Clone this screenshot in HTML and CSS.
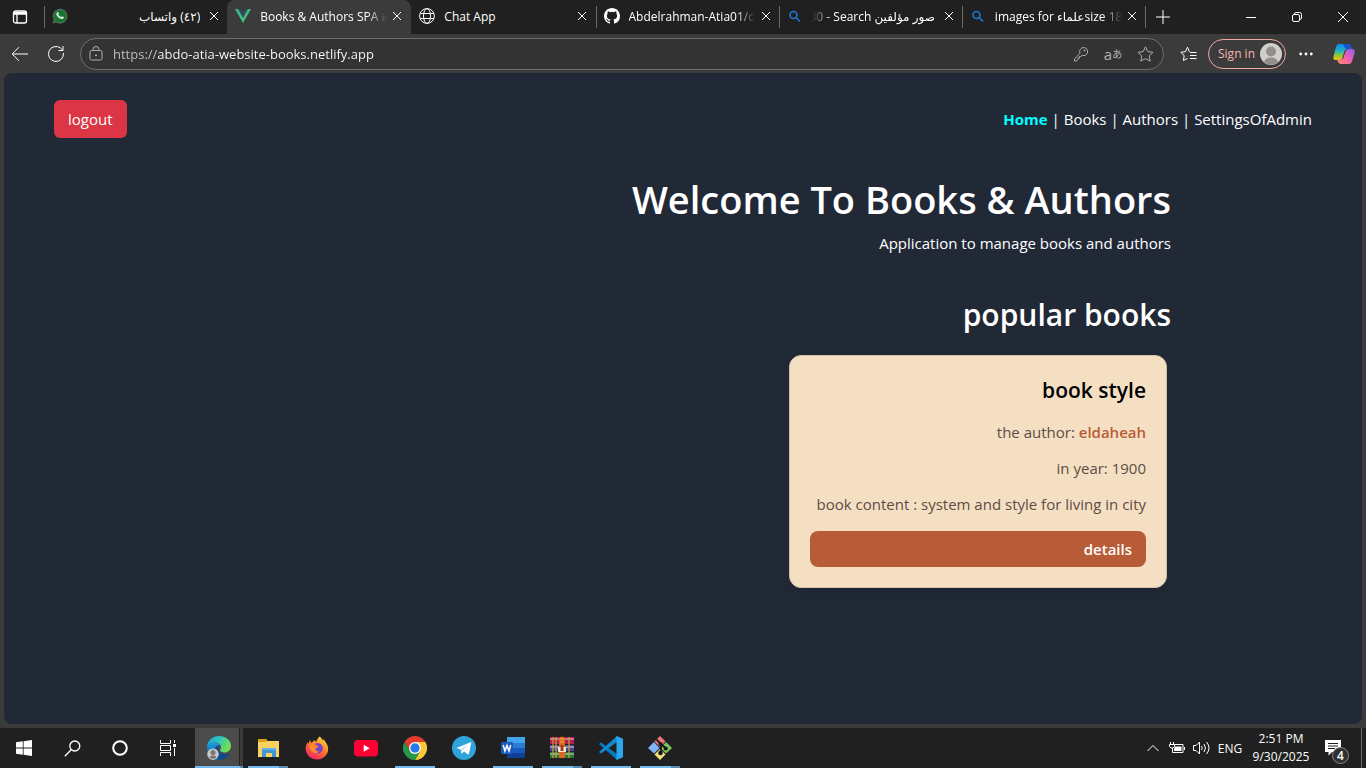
FILE: index.html
```
<!DOCTYPE html>
<html lang="en">
<head>
  <meta charset="UTF-8">
  <meta name="viewport" content="width=device-width, initial-scale=1.0">
  <title>Books &amp; Authors SPA</title>
  <link rel="stylesheet" href="styles.css">
</head>
<body>
  <!-- Browser tabs -->
  <div class="tab-bar">
    <button class="tab-menu" aria-label="Tab actions">
      <svg width="16" height="16" viewBox="0 0 16 16" fill="none" stroke="#fff" stroke-width="1.3"><rect x="1.5" y="2" width="13" height="12" rx="2"/><path d="M2 3.5h12M2 5h12M5 5v9" /></svg>
    </button>
    <div class="tabs">
      <div class="tab first">
        <svg class="favicon" viewBox="0 0 16 16"><path d="M0.6 15.5 1.7 11.6A7.3 7.3 0 1 1 4.4 14.4Z" fill="#606b65"/><path d="M1.9 14.2 2.8 11.3A6.2 6.2 0 1 1 4.8 13.4Z" fill="#14752f"/><path d="M5.4 4.2c.5-.4.9-.2 1.1.2l.5 1.2c.1.4-.4.8-.6 1 .6 1.2 1.6 2 2.8 2.6.3-.2.7-1 1.1-.8l1.5.7c.3.3 0 1.2-.5 1.6-2.8 1.7-7.7-2.900-6.900-5.200.2-.6.6-1 1-1.300z" fill="#d4e1d8"/></svg>
        <span class="tab-title rtl">(٤٢) واتساب</span>
        <button class="tab-close" aria-label="Close tab"><svg width="10" height="10" viewBox="0 0 10 10"><path d="M1 1l8 8M9 1l-8 8"/></svg></button>
      </div>
      <div class="tab active">
        <svg class="favicon" viewBox="0 0 16 16"><path d="M0 1h3.200L8 9.400 12.800 1H16L8 15z" fill="#42b883"/><path d="M3.200 1h3L8 4.100 9.800 1h3L8 9.400z" fill="#35495e"/></svg>
        <span class="tab-title fade">Books &amp; Authors SPA ة</span>
        <button class="tab-close" aria-label="Close tab"><svg width="10" height="10" viewBox="0 0 10 10"><path d="M1 1l8 8M9 1l-8 8"/></svg></button>
      </div>
      <div class="tab">
        <svg class="favicon" viewBox="0 0 16 16" fill="none" stroke="#fff"><circle cx="8" cy="8" r="7.400"/><ellipse cx="8" cy="8" rx="3.500" ry="7.400"/><path d="M1.400 5.500h13.200M1.400 10.500h13.200"/></svg>
        <span class="tab-title">Chat App</span>
        <button class="tab-close" aria-label="Close tab"><svg width="10" height="10" viewBox="0 0 10 10"><path d="M1 1l8 8M9 1l-8 8"/></svg></button>
      </div>
      <div class="tab line">
        <svg class="favicon" viewBox="0 0 16 16"><path fill="#fff" d="M8 0C3.580 0 0 3.580 0 8c0 3.540 2.290 6.530 5.470 7.590.4.070.55-.17.55-.38 0-.19-.01-.82-.01-1.490-2.010.37-2.530-.49-2.690-.94-.09-.23-.48-.94-.82-1.130-.28-.15-.68-.52-.01-.53.63-.01 1.080.58 1.230.82.72 1.210 1.870.87 2.330.66.070-.52.28-.87.51-1.070-1.780-.2-3.640-.89-3.640-3.950 0-.87.31-1.590.82-2.150-.08-.2-.36-1.020.08-2.120 0 0 .67-.21 2.200.82a7.600 7.600 0 0 1 4 0c1.530-1.040 2.200-.82 2.200-.82.44 1.100.16 1.920.08 2.120.51.56.82 1.270.82 2.150 0 3.070-1.870 3.750-3.650 3.950.29.25.54.73.54 1.480 0 1.070-.01 1.930-.01 2.200 0 .21.15.46.55.38A8 8 0 0 0 16 8c0-4.420-3.580-8-8-8z"/></svg>
        <span class="tab-title fade">Abdelrahman-Atia01/c</span>
        <button class="tab-close" aria-label="Close tab"><svg width="10" height="10" viewBox="0 0 10 10"><path d="M1 1l8 8M9 1l-8 8"/></svg></button>
      </div>
      <div class="tab line">
        <svg class="favicon" viewBox="0 0 16 16" fill="none" stroke="#1a78cf" stroke-width="1.700"><circle cx="6.500" cy="7" r="3.500"/><path d="M9 9.500l4 4"/></svg>
        <span class="tab-title rtl fade-left"><bdi dir="ltr">30 - Search <bdi>صور مؤلفين</bdi></bdi></span>
        <button class="tab-close" aria-label="Close tab"><svg width="10" height="10" viewBox="0 0 10 10"><path d="M1 1l8 8M9 1l-8 8"/></svg></button>
      </div>
      <div class="tab line last">
        <svg class="favicon" viewBox="0 0 16 16" fill="none" stroke="#1a78cf" stroke-width="1.700"><circle cx="6.500" cy="7" r="3.500"/><path d="M9 9.500l4 4"/></svg>
        <span class="tab-title fade">images for <bdi>علماء</bdi>size 18</span>
        <button class="tab-close" aria-label="Close tab"><svg width="10" height="10" viewBox="0 0 10 10"><path d="M1 1l8 8M9 1l-8 8"/></svg></button>
      </div>
    </div>
    <button class="new-tab" aria-label="New tab"><svg width="14" height="14" viewBox="0 0 14 14"><path d="M7 0v14M0 7h14"/></svg></button>
    <div class="window-buttons">
      <button aria-label="Minimize"><svg width="10" height="10" viewBox="0 0 10 10"><path d="M0 5.500h10"/></svg></button>
      <button aria-label="Restore"><svg width="10" height="10" viewBox="0 0 10 10"><rect x=".5" y="2.500" width="7" height="7" rx="1.500"/><path d="M2.500 2.500V2Q2.500.5 4 .5h3.500Q9.500.5 9.500 2.500V6Q9.500 7.500 7.500 7.500"/></svg></button>
      <button aria-label="Close"><svg width="10" height="10" viewBox="0 0 10 10"><path d="M0 0l10 10M10 0L0 10"/></svg></button>
    </div>
  </div>

  <!-- Address bar -->
  <div class="toolbar">
    <button class="tool" aria-label="Back"><svg width="18" height="16" viewBox="0 0 18 16"><path d="M17 8H1.500M8 1.200L1.200 8 8 14.800"/></svg></button>
    <button class="tool" aria-label="Refresh"><svg width="18" height="18" viewBox="0 0 18 18"><path d="M16.400 8A7.500 7.500 0 1 1 13.500 3L15.800 5.200M16 1v4.500h-4.500"/></svg></button>
    <div class="address">
      <svg width="14" height="15" viewBox="0 0 14 15" stroke="#ddd"><rect x="1" y="4.500" width="12" height="9.500" rx="1.500"/><path d="M4 4.500V3.500a3 3 0 0 1 6 0v1"/><circle cx="7" cy="9.300" r=".6" fill="#fff"/></svg>
      <input type="text" value="https://abdo-atia-website-books.netlify.app" aria-label="Address">
      <button aria-label="Passwords"><svg width="16" height="16" viewBox="0 0 16 16"><path d="M7 7.200A4 4 0 1 1 9.200 9.300L7.700 10.500H6.500v1.500H5v1.500L3.500 15h-2v-2z"/><circle cx="11.500" cy="4.500" r=".6"/></svg></button>
      <button class="translate" aria-label="Translate">a<span>あ</span></button>
      <button aria-label="Add to favorites"><svg width="17" height="16" viewBox="0 0 17 16"><path d="M8.500.8l2.300 4.800 5.200.7-3.800 3.600 1 5.200-4.700-2.500-4.700 2.500 1-5.200L1 6.300l5.200-.7z"/></svg></button>
    </div>
    <button class="tool favorites" aria-label="Favorites"><svg width="17" height="16" viewBox="0 0 17 16"><path d="M9.500 6L7.500 1.200 5.400 5.700.8 6.300l3.400 3.300-.8 4.900 4.100-2.100M10 6.500h6.500M10 9.500h6.500M10 12.500h6.500"/></svg></button>
    <button class="sign-in">Sign in
      <svg width="22" height="22" viewBox="0 0 22 22"><circle cx="11" cy="11" r="11" fill="#d1cfcc"/><circle cx="11" cy="8.500" r="5" fill="#918e8b"/><path d="M4 19.300C5 15.500 8 14.500 11 14.500s6 1 7 4.800A11 11 0 0 1 4 19.300z" fill="#918e8b"/></svg>
    </button>
    <button class="tool more" aria-label="Settings and more"><svg width="14" height="4" viewBox="0 0 14 4"><g fill="#fff" stroke="none"><circle cx="1.700" cy="2" r="1.400"/><circle cx="7" cy="2" r="1.400"/><circle cx="12.300" cy="2" r="1.400"/></g></svg></button>
    <button class="copilot" aria-label="Copilot">
      <svg width="22" height="22" viewBox="0 0 22 22">
        <defs>
          <linearGradient id="cpA" x1="0" y1="0" x2="0" y2="1"><stop offset="0" stop-color="#1683f0"/><stop offset=".45" stop-color="#22b8c0"/><stop offset=".7" stop-color="#8cc63f"/><stop offset="1" stop-color="#f4c500"/></linearGradient>
          <linearGradient id="cpB" x1="1" y1="0" x2="0" y2="1"><stop offset="0" stop-color="#8c5bf2"/><stop offset=".5" stop-color="#ef5fb2"/><stop offset="1" stop-color="#ff9060"/></linearGradient>
        </defs>
        <path d="M6 1h9q2 0 2.700 2l.8 3H14q-2 0-2.500 2l-2 6.500Q9 17 6.500 17H3Q-.5 17 .6 13L3 4Q4 1 6 1z" fill="url(#cpA)"/>
        <path d="M10 1h5q2 0 2.700 2l.8 3H14Q12 6 11.600 4z" fill="#1554d0"/>
        <path d="M16 21H8q-2 0-3-2l-.8-2.500H8q2 0 2.500-2l2-6Q13 6 15.500 6H19q3.500 0 2.500 4L19 18.500Q18 21 16 21z" fill="url(#cpB)"/>
      </svg>
    </button>
  </div>

  <!-- Website -->
  <div class="page">
    <header class="site-header">
      <button class="logout">logout</button>
      <nav>
        <a href="#" class="current">Home</a> | <a href="#">Books</a> | <a href="#">Authors</a> | <a href="#">SettingsOfAdmin</a>
      </nav>
    </header>
    <main class="content">
      <h1>Welcome To Books &amp; Authors</h1>
      <p>Application to manage books and authors</p>
      <h2>popular books</h2>
      <div class="book-card">
        <h3>book style</h3>
        <p>the author: <strong>eldaheah</strong></p>
        <p>in year: 1900</p>
        <p>book content : system and style for living in city</p>
        <a href="#" class="details">details</a>
      </div>
    </main>
  </div>

  <!-- Windows taskbar -->
  <div class="taskbar">
    <div class="system">
      <button aria-label="Start"><svg width="16" height="16" viewBox="0 0 16 16" fill="#fff"><path d="M0 2.300l6.800-1v6.300H0zM7.600 1.200L16 0v7.600H7.600zM0 8.400h6.800v6.300L0 13.700zM7.600 8.400H16V16l-8.400-1.200z"/></svg></button>
      <button aria-label="Search"><svg width="17" height="17" viewBox="0 0 17 17" fill="none" stroke="#fff" stroke-width="1.300"><circle cx="10.800" cy="6" r="5"/><path d="M7.200 9.700L.8 16.200"/></svg></button>
      <button aria-label="Cortana"><svg width="16" height="16" viewBox="0 0 16 16" fill="none" stroke="#fff" stroke-width="2"><circle cx="8" cy="8" r="6.800"/></svg></button>
      <button aria-label="Task view"><svg width="16" height="16" viewBox="0 0 16 16" fill="none" stroke="#fff"><path d="M.5 0v3.500h10V0M.5 16v-3.500h10V16M.5 5.500h10v5H.500zM14.500 0v3M14.500 8v8"/><path d="M13 4h3v3h-3z" fill="#fff" stroke="none"/></svg></button>
    </div>
    <div class="apps">
      <button class="open focused grouped" aria-label="Edge">
        <svg width="24" height="24" viewBox="0 0 24 24">
          <defs>
            <linearGradient id="edA" x1="0" y1="0" x2="1" y2=".4"><stop offset="0" stop-color="#249fd8"/><stop offset=".5" stop-color="#2cc4c2"/><stop offset="1" stop-color="#72df50"/></linearGradient>
            <linearGradient id="edB" x1="0" y1="0" x2="0" y2="1"><stop offset="0" stop-color="#1b9de2"/><stop offset="1" stop-color="#0c59a4"/></linearGradient>
          </defs>
          <path d="M0 11C.5 4.500 5.500 0 12 0c7 0 12 4.500 12 10 0 4-3 6.500-6.500 6.500-3 0-4.500-1.200-4.500-2.200 0-.8 1-1 1-3C14 8.500 11 6.500 7.500 6.500 4 6.500 1 8.500 0 11z" fill="url(#edA)"/>
          <path d="M0 12c0-3.500 4-6 8-5.500 2.500.3 4.500 1.500 5.300 3-3.300-.7-5.300 1.500-5.300 5 0 5 4 8.500 8.500 7.700C14 24 12.500 24 11.500 24 5 23.800 0 18.500 0 12z" fill="url(#edB)"/>
          <path d="M8 14.500c0-3 1.500-5 4-5.200-1.500 1.500-1.500 4 0 6 2.500 3.300 6.800 3.500 10.500 2.200C20.500 21.500 17 23.500 14 23.500c-4 0-6-4-6-9z" fill="#114a8b"/>
          <circle cx="6" cy="18.200" r="5.800" fill="#c7c7c7"/><circle cx="6" cy="16.600" r="2.500" fill="#777"/><path d="M2.200 21.500q3.800-4.500 7.600 0Q6 24 2.200 21.500z" fill="#777"/>
        </svg>
      </button>
      <button class="open grouped" aria-label="File Explorer">
        <svg width="24" height="24" viewBox="0 0 24 24"><path d="M2 3h8l1.500 2H23v16H2z" fill="#ffd966"/><path d="M2 3h8l1.500 3H2z" fill="#dea110"/><path d="M2 6h21v13H2z" fill="#fbd163"/><path d="M6 12h14v9h-4v-4h-6v4H6z" fill="#3f95d6"/><path d="M6 12h14v2H6z" fill="#64b1e8"/></svg>
      </button>
      <button aria-label="Firefox">
        <svg width="24" height="24" viewBox="0 0 24 24">
          <defs><linearGradient id="ffA" x1=".8" y1="0" x2=".2" y2="1"><stop offset="0" stop-color="#ffe33b"/><stop offset=".45" stop-color="#ff7a2b"/><stop offset="1" stop-color="#ef1d68"/></linearGradient></defs>
          <path d="M14.500.5c2 1.300 3 3 3.500 4.500 0-.7.500-1.500 1-2 .3 2.500 4.200 5 4.200 10C23.200 19 18 23.500 12 23.500S.7 19 .7 12.800c0-3 1-5.300 2.300-6.800l.2 2L5 4l1.200 2.700Q8 6 9.300 4L11 6c1-2 2-4 3.500-5.500z" fill="url(#ffA)"/>
          <circle cx="12.500" cy="12.200" r="5.300" fill="#7542c8"/>
          <path d="M5 8.500c2-1.500 5-.5 6.500 1 1 0 2 .2 2 .8-.3 1.200-2.500 1.500-3 2.500-.3 1.700 1.500 3 4 2.500-2 2.800-7 2.300-8.500-1C5 12 4 10.500 5 8.500z" fill="#ff8b26"/>
        </svg>
      </button>
      <button aria-label="YouTube">
        <svg width="24" height="24" viewBox="0 0 24 24"><rect x="0" y="4" width="24" height="16.500" rx="4" fill="#ff0033"/><path d="M9.700 8.700v7l6-3.500z" fill="#fff"/></svg>
      </button>
      <button class="open" aria-label="Chrome">
        <svg width="24" height="24" viewBox="0 0 24 24"><path d="M1.600 6A12 12 0 0 1 22.400 6H12L6.800 15z" fill="#e33b2e"/><path d="M22.400 6A12 12 0 0 1 12 24l5.200-9L12 6z" fill="#fcc934"/><path d="M12 24A12 12 0 0 1 1.600 6l5.200 9h10.400z" fill="#279847"/><circle cx="12" cy="12" r="6" fill="#fff"/><circle cx="12" cy="12" r="4.700" fill="#277be8"/></svg>
      </button>
      <button aria-label="Telegram">
        <svg width="24" height="24" viewBox="0 0 24 24"><circle cx="12" cy="12" r="12" fill="#2fa4db"/><path d="M4.500 12L18.500 6.300q1-.3.700 1L17 17.800q-.3 1.200-1.400.5L12 15.600l-2 2q-.6.5-.7-.3l.3-3.300z" fill="#fff"/><path d="M8.400 13.200l8-5-6.300 6.300-.8 3z" fill="#c3dcea"/></svg>
      </button>
      <button class="open" aria-label="Word">
        <svg width="24" height="24" viewBox="0 0 24 24"><path d="M6 1h18v6H6z" fill="#41a5ee"/><path d="M6 7h18v5H6z" fill="#2b7cd3"/><path d="M6 12h18v5H6z" fill="#185abd"/><path d="M6 17h18v5H6z" fill="#103f91"/><rect x="0" y="6" width="12" height="12" rx="1" fill="#185abd"/><path d="M2.200 9l1.700 6L6 9.500 8 15l1.700-6" fill="none" stroke="#fff" stroke-width="1.500"/></svg>
      </button>
      <button class="open grouped" aria-label="WinRAR">
        <svg width="24" height="24" viewBox="0 0 24 24"><path d="M0 1h24v7H0z" fill="#b51d4e"/><path d="M0 9h24v6H0z" fill="#484798"/><path d="M0 16h24v6H0z" fill="#287735"/><path d="M0 3h24M0 11h24M0 18h24" stroke="#ddd0cd" stroke-width="1"/><path d="M3 1v21M6 1v21M19 1v21" stroke="#c7a33b" stroke-width="1.200"/><path d="M9 2q3-3 6 0v20H9z" fill="#d9671f"/><path d="M8 11h8v5H8z" fill="#f4e6d6"/><path d="M10.500 9h3v6h-3z" fill="#a13c15"/><path d="M10 3h4M10 6h4" stroke="#f4b63a"/></svg>
      </button>
      <button class="open" aria-label="Visual Studio Code">
        <svg width="24" height="24" viewBox="0 0 24 24"><path d="M0 8l2-1.500L18 18v6z" fill="#0879bd"/><path d="M0 16l2 1.500L18 6V0z" fill="#0f8bd2"/><path d="M17.500 0L24 2.800v18.400L17.500 24z" fill="#2aa7ee"/></svg>
      </button>
      <button class="open grouped" aria-label="Git Bash">
        <svg width="24" height="24" viewBox="0 0 24 24"><path d="M12 0l5.500 5.500L12 11 6.500 5.500z" fill="#f07777"/><path d="M6 6l5.500 6L6 17.500 0 12z" fill="#80b4fc"/><path d="M18 6l6 6-6 5.500-5.500-5.500z" fill="#7cc35b"/><path d="M12 13l5.500 5.500L12 24l-5.500-5.500z" fill="#f6e27b"/><path d="M8.500 3.500L13 8v9M13 8l5 4.500" fill="none" stroke="#171717" stroke-width="1.800"/><g fill="#171717"><circle cx="12.500" cy="8" r="2"/><circle cx="12.500" cy="17" r="2.300"/><circle cx="17.700" cy="12.500" r="2"/></g></svg>
      </button>
    </div>
    <div class="tray">
      <button aria-label="Show hidden icons"><svg width="12" height="8" viewBox="0 0 12 8"><path d="M.5 7L6 1.500 11.500 7"/></svg></button>
      <button aria-label="Battery"><svg width="16" height="12" viewBox="0 0 16 12"><path d="M5.500 2.500h8.500v8H3.500V7M15.500 5v3M1.500 0v2M4.500 0v2M.5 2.500h5v2L4 6H2L.5 4.500zM3.500 6v2"/><path d="M6 4.500h6.500v4.500H5V7z" fill="#fff" stroke="none"/></svg></button>
      <button aria-label="Volume"><svg width="17" height="14" viewBox="0 0 17 14"><path d="M.5 4.500H3L6.500 1v12L3 9.500H.5zM8.500 5q1.500 2 0 4M11 3q3 4 0 8M13.500 1q5 6 0 12"/></svg></button>
      <button class="lang">ENG</button>
      <button class="clock"><span>2:51 PM</span><span>9/30/2025</span></button>
      <button class="notifications" aria-label="Notifications">
        <svg width="16" height="16" viewBox="0 0 16 16"><path d="M0 0h16v12H7l-3.500 3.500V12H0z" fill="#fff" stroke="none"/><path d="M3 3.500h10M3 6h10M3 8.500h7" stroke="#202020"/></svg>
        <span class="badge">4</span>
      </button>
    </div>
  </div>
</body>
</html>
```
FILE: styles.css
```
* {
  box-sizing: border-box;
}
body {
  margin: 0;
  min-height: 100vh;
  display: flex;
  flex-direction: column;
  background: #3b3b3b;
  color: #fff;
  font-family: "Open Sans", "Noto Sans", "DejaVu Sans", sans-serif;
  font-size: 12px;
}
button {
  display: flex;
  align-items: center;
  justify-content: center;
  flex: none;
  padding: 0;
  border: none;
  background: none;
  color: inherit;
  font: inherit;
  cursor: pointer;
}
svg {
  flex: none;
}

/* Tabs */
.tab-bar {
  display: flex;
  height: 34px;
  background: #202020;
}
.tab-menu {
  width: 40px;
  margin-right: 4px;
}
.tabs {
  display: flex;
  flex: 0 1 1102px;
  min-width: 0;
}
.tab {
  display: flex;
  align-items: center;
  flex: 1 1 0;
  min-width: 0;
  padding: 0 8px 2px 7px;
  border: solid transparent;
  border-width: 0 1px;
}
.tab.first,
.tab.line {
  border-image: linear-gradient(transparent 7px, #6b6b6b 7px, #6b6b6b 27px, transparent 27px) 1;
  border-right-width: 0;
}
.tab.last {
  border-right-width: 1px;
}
.tab.active {
  background: #3b3b3b;
  border-radius: 8px 8px 0 0;
}
.favicon {
  width: 16px;
  height: 16px;
}
.tab-title {
  flex: 1;
  margin: 0 5px 0 9px;
  overflow: hidden;
  white-space: nowrap;
}
.tab-title.rtl {
  margin-right: 9px;
  direction: rtl;
}
.fade {
  mask-image: linear-gradient(to left, transparent, #000 20px);
}
.fade-left {
  mask-image: linear-gradient(to right, transparent, #000 20px);
}
.tab-close svg,
.new-tab svg,
.window-buttons svg {
  fill: none;
  stroke: #fff;
  stroke-width: 1;
}
.new-tab {
  width: 34px;
}
.window-buttons {
  display: flex;
  margin-left: auto;
}
.window-buttons button {
  width: 46px;
}

/* Toolbar */
.toolbar {
  display: flex;
  align-items: center;
  height: 39px;
  padding: 0 11px 0 2px;
}
.tool {
  width: 36px;
  height: 32px;
}
.toolbar svg {
  fill: none;
  stroke: #fff;
}
.address {
  display: flex;
  align-items: center;
  flex: 1;
  min-width: 0;
  height: 32px;
  margin-left: 6px;
  padding: 0 2px 0 8px;
  border: 1px solid #6e6e6e;
  border-radius: 16px;
  background: #333;
}
.address svg {
  stroke: #b0b0b0;
}
.address input {
  flex: 1;
  min-width: 0;
  margin-left: 10px;
  padding: 0;
  border: none;
  outline: none;
  background: linear-gradient(to right, #c4c4c4 44px, #fff 44px);
  background-clip: text;
  -webkit-background-clip: text;
  color: transparent;
  font-family: inherit;
  font-size: 13px;
}
.address button {
  width: 32px;
  height: 28px;
}
.address .translate {
  color: #b0b0b0;
  font-size: 15px;
}
.translate span {
  font-family: "Noto Sans CJK JP", sans-serif;
  font-size: 10px;
}
.favorites {
  margin-left: 6px;
}
.sign-in {
  justify-content: flex-end;
  gap: 5px;
  width: 78px;
  height: 30px;
  margin-left: 2px;
  padding-right: 3px;
  border: 1px solid #f0a8a4;
  border-radius: 15px;
  color: #f7b4af;
}
.toolbar .sign-in svg {
  stroke: none;
}
.more {
  margin-left: 2px;
}
.copilot {
  margin-left: 9px;
}
.toolbar .copilot svg {
  stroke: none;
}

/* Website */
.page {
  flex: 1;
  margin: 0 4px 4px;
  padding: 27px 50px;
  border-radius: 8px;
  background: #212937;
  font-size: 15px;
  line-height: 24px;
}
.site-header {
  display: flex;
  align-items: center;
  justify-content: space-between;
}
.logout {
  padding: 7px 14px;
  border-radius: 6px;
  background: #dc3545;
}
.site-header a {
  color: #fff;
  text-decoration: none;
}
.site-header .current {
  color: #00ffff;
  font-weight: bold;
}
.content {
  display: flex;
  flex-direction: column;
  align-items: flex-end;
  max-width: 976px;
  margin: 37px auto 0;
  text-align: right;
}
.content h1,
.content h2,
.content h3,
.content p {
  margin: 0;
}
.content h1 {
  margin-bottom: 8px;
  font-size: 38px;
  font-weight: 600;
  line-height: 48px;
}
.content h2 {
  margin: 41px 0 21px;
  font-size: 30px;
  font-weight: 600;
  line-height: 38px;
}
.content .book-card {
  min-width: 378px;
  margin-right: 4px;
  padding: 20px;
  border: 1px solid #d5c2a9;
  border-radius: 12px;
  background: #f5dfc3;
  box-shadow: 0 4px 8px rgba(0, 0, 0, 0.1);
  color: #5c4d45;
}
.book-card h3 {
  font-size: 21px;
  font-weight: 600;
  line-height: 28px;
  color: #000;
}
.content .book-card p {
  margin-top: 12px;
}
.content .book-card h3 + p {
  margin-top: 16px;
}
.book-card strong {
  color: #b85c38;
  font-weight: 600;
}
.details {
  display: block;
  margin-top: 15px;
  padding: 6px 14px;
  border-radius: 8px;
  background: #b85c38;
  color: #fff;
  font-weight: 600;
  text-decoration: none;
}

/* Taskbar */
.taskbar {
  display: flex;
  height: 40px;
  background: #202020;
}
.system,
.apps,
.tray {
  display: flex;
}
.system button {
  width: 48px;
}
.apps {
  gap: 1px;
  margin-left: 3px;
}
.apps button {
  position: relative;
  width: 48px;
}
.apps .open::after {
  content: "";
  position: absolute;
  right: 4px;
  bottom: 0;
  left: 4px;
  height: 2px;
  background: #76b9ed;
}
.apps .grouped::after {
  background: linear-gradient(to left, #5a8ab0 9px, #76b9ed 9px);
}
.apps .focused {
  background: linear-gradient(to left, #3c3c3c 3px, #222 3px, #222 4px, #4b4b4b 4px);
}
.apps .focused::after {
  right: 0;
  left: 0;
  background: linear-gradient(to left, #5a8ab0 3px, #76b9ed 3px);
}
.tray {
  margin-left: auto;
  margin-right: 4px;
  border-right: 1px solid #6b6b6b;
}
.tray button {
  width: 24px;
}
.tray svg {
  fill: none;
  stroke: #fff;
}
.tray .lang {
  width: 34px;
}
.tray .clock {
  flex-direction: column;
  width: 68px;
  line-height: 18px;
}
.tray .notifications {
  position: relative;
  width: 46px;
  padding-right: 10px;
}
.badge {
  position: absolute;
  right: 12px;
  bottom: 4px;
  width: 17px;
  height: 17px;
  border: 1px solid #8a8a8a;
  border-radius: 50%;
  background: #303030;
  font-weight: 600;
  line-height: 15px;
  text-align: center;
}
```
